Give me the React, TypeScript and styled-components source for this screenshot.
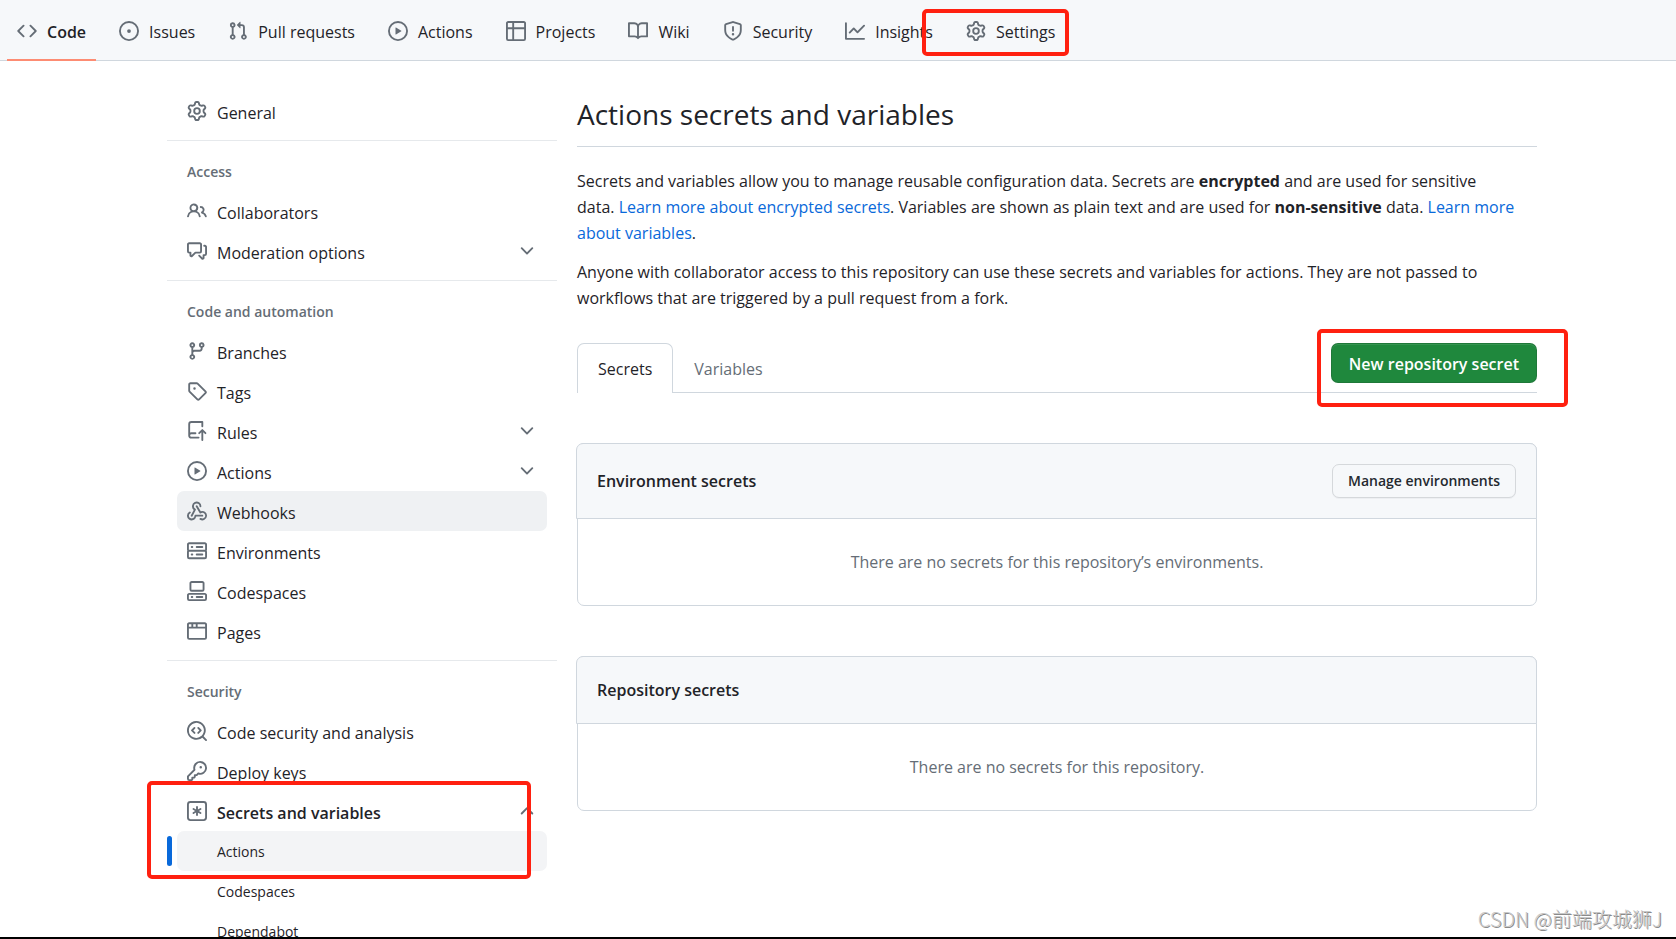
import React from "react";
import styled, { createGlobalStyle, css } from "styled-components";

const colors = {
  text: "#1f2328",
  muted: "#656d76",
  border: "#d0d7de",
  subtleBorder: "#e6e9ec",
  canvasSubtle: "#f6f8fa",
  accent: "#0969da",
  green: "#1f883d",
  marker: "#ff2010",
};

const GlobalStyle = createGlobalStyle`
  *, *::before, *::after { box-sizing: border-box; }
  body {
    margin: 0;
    background: #fff;
    color: ${colors.text};
    font-family: "Segoe UI", "Open Sans", "Noto Sans", "Noto Sans CJK SC", sans-serif;
    font-size: 16px;
    line-height: 26px;
  }
  h1, h2, h3, p, ul { margin: 0; padding: 0; }
  ul { list-style: none; }
  button { font-family: inherit; cursor: pointer; }
`;

/* ---------- icons (16px grid) ---------- */

const iconPaths = {
  code: [
    "m11.28 3.22 4.25 4.25a.75.75 0 0 1 0 1.06l-4.25 4.25a.749.749 0 0 1-1.275-.326.749.749 0 0 1 .215-.734L13.94 8l-3.72-3.72a.749.749 0 0 1 .326-1.275.749.749 0 0 1 .734.215Zm-6.56 0a.751.751 0 0 1 1.042.018.751.751 0 0 1 .018 1.042L2.06 8l3.72 3.72a.749.749 0 0 1-.326 1.275.749.749 0 0 1-.734-.215L.47 8.53a.75.75 0 0 1 0-1.06Z",
  ],
  issue: [
    "M8 9.5a1.5 1.5 0 1 0 0-3 1.5 1.5 0 0 0 0 3Z",
    "M8 0a8 8 0 1 1 0 16A8 8 0 0 1 8 0ZM1.5 8a6.5 6.5 0 1 0 13 0 6.5 6.5 0 0 0-13 0Z",
  ],
  pullRequest: [
    "M1.5 3.25a2.25 2.25 0 1 1 3 2.122v5.256a2.251 2.251 0 1 1-1.5 0V5.372A2.25 2.25 0 0 1 1.5 3.25Zm5.677-.177L9.573.677A.25.25 0 0 1 10 .854V2.5h1A2.5 2.5 0 0 1 13.5 5v5.628a2.251 2.251 0 1 1-1.5 0V5a1 1 0 0 0-1-1h-1v1.646a.25.25 0 0 1-.427.177L7.177 3.427a.25.25 0 0 1 0-.354ZM3.75 2.5a.75.75 0 1 0 0 1.5.75.75 0 0 0 0-1.5Zm0 9.5a.75.75 0 1 0 0 1.5.75.75 0 0 0 0-1.5Zm8.25.75a.75.75 0 1 0 1.5 0 .75.75 0 0 0-1.5 0Z",
  ],
  play: [
    "M8 0a8 8 0 1 1 0 16A8 8 0 0 1 8 0ZM1.5 8a6.5 6.5 0 1 0 13 0 6.5 6.5 0 0 0-13 0Zm4.879-2.773 4.264 2.559a.25.25 0 0 1 0 .428l-4.264 2.559A.25.25 0 0 1 6 10.559V5.442a.25.25 0 0 1 .379-.215Z",
  ],
  table: [
    "M0 1.75C0 .784.784 0 1.75 0h12.5C15.216 0 16 .784 16 1.75v12.5A1.75 1.75 0 0 1 14.25 16H1.75A1.75 1.75 0 0 1 0 14.25ZM6.5 6.5v8h7.75a.25.25 0 0 0 .25-.25V6.5Zm8-1.5V1.75a.25.25 0 0 0-.25-.25H6.5V5Zm-13 1.5v7.75c0 .138.112.25.25.25H5v-8ZM5 5V1.5H1.75a.25.25 0 0 0-.25.25V5Z",
  ],
  book: [
    "M0 1.75A.75.75 0 0 1 .75 1h4.253c1.227 0 2.317.59 3 1.501A3.743 3.743 0 0 1 11.006 1h4.245a.75.75 0 0 1 .75.75v10.5a.75.75 0 0 1-.75.75h-4.507a2.25 2.25 0 0 0-1.591.659l-.622.621a.75.75 0 0 1-1.06 0l-.622-.621A2.25 2.25 0 0 0 5.258 13H.75a.75.75 0 0 1-.75-.75Zm7.251 10.324.004-5.073-.002-2.253A2.25 2.25 0 0 0 5.003 2.5H1.5v9h3.757a3.75 3.75 0 0 1 1.994.574ZM8.755 4.75l-.004 7.322a3.752 3.752 0 0 1 1.992-.572H14.5v-9h-3.495a2.25 2.25 0 0 0-2.25 2.25Z",
  ],
  shield: [
    "M7.467.133a1.748 1.748 0 0 1 1.066 0l5.25 1.68A1.75 1.75 0 0 1 15 3.48V7c0 1.566-.32 3.182-1.303 4.682-.983 1.498-2.585 2.813-5.032 3.855a1.697 1.697 0 0 1-1.33 0c-2.447-1.042-4.049-2.357-5.032-3.855C1.32 10.182 1 8.566 1 7V3.48a1.75 1.75 0 0 1 1.217-1.667Zm.61 1.429a.25.25 0 0 0-.153 0l-5.25 1.68a.25.25 0 0 0-.174.238V7c0 1.358.275 2.666 1.057 3.86.784 1.194 2.121 2.34 4.366 3.297a.196.196 0 0 0 .154 0c2.245-.956 3.582-2.104 4.366-3.298C13.225 9.666 13.5 8.36 13.5 7V3.48a.251.251 0 0 0-.174-.237l-5.25-1.68ZM8.75 4.75v3a.75.75 0 0 1-1.5 0v-3a.75.75 0 0 1 1.5 0ZM9 10.5a1 1 0 1 1-2 0 1 1 0 0 1 2 0Z",
  ],
  graph: [
    "M1.5 1.75V13.5h13.75a.75.75 0 0 1 0 1.5H.75a.75.75 0 0 1-.75-.75V1.75a.75.75 0 0 1 1.5 0Zm14.28 2.53-5.25 5.25a.75.75 0 0 1-1.06 0L7 7.06 4.28 9.78a.751.751 0 0 1-1.042-.018.751.751 0 0 1-.018-1.042l3.25-3.25a.75.75 0 0 1 1.06 0L10 7.94l4.72-4.72a.751.751 0 0 1 1.042.018.751.751 0 0 1 .018 1.042Z",
  ],
  gear: [
    "M8 0a8.2 8.2 0 0 1 .701.031C9.444.095 9.99.645 10.16 1.29l.288 1.107c.018.066.079.158.212.224.231.114.454.243.668.386.123.082.233.09.299.071l1.103-.303c.644-.176 1.392.021 1.82.63.27.385.506.792.704 1.218.315.675.111 1.422-.364 1.891l-.814.806c-.049.048-.098.147-.088.294.016.257.016.515 0 .772-.01.147.038.246.088.294l.814.806c.475.469.679 1.216.364 1.891a7.977 7.977 0 0 1-.704 1.217c-.428.61-1.176.807-1.82.63l-1.102-.302c-.067-.019-.177-.011-.3.071a5.909 5.909 0 0 1-.668.386c-.133.066-.194.158-.211.224l-.29 1.106c-.168.646-.715 1.196-1.458 1.26a8.006 8.006 0 0 1-1.402 0c-.743-.064-1.289-.614-1.458-1.26l-.289-1.106c-.018-.066-.079-.158-.212-.224a5.738 5.738 0 0 1-.668-.386c-.123-.082-.233-.09-.299-.071l-1.103.303c-.644.176-1.392-.021-1.82-.63a8.12 8.12 0 0 1-.704-1.218c-.315-.675-.111-1.422.363-1.891l.815-.806c.05-.048.098-.147.088-.294a6.214 6.214 0 0 1 0-.772c.01-.147-.038-.246-.088-.294l-.815-.806C.635 6.045.431 5.298.746 4.623a7.92 7.92 0 0 1 .704-1.217c.428-.61 1.176-.807 1.82-.63l1.102.302c.067.019.177.011.3-.071.214-.143.437-.272.668-.386.133-.066.194-.158.211-.224l.29-1.106C6.009.645 6.556.095 7.299.03 7.53.01 7.764 0 8 0Zm-.571 1.525c-.036.003-.108.036-.137.146l-.289 1.105c-.147.561-.549.967-.998 1.189-.173.086-.34.183-.5.29-.417.278-.97.423-1.529.27l-1.103-.303c-.109-.03-.175.016-.195.045-.22.312-.412.644-.573.99-.014.031-.021.11.059.19l.815.806c.411.406.562.957.53 1.456a4.709 4.709 0 0 0 0 .582c.032.499-.119 1.05-.53 1.456l-.815.806c-.081.08-.073.159-.059.19.162.346.353.677.573.989.02.03.085.076.195.046l1.102-.303c.56-.153 1.113-.008 1.53.27.161.107.328.204.501.29.447.222.85.629.997 1.189l.289 1.105c.029.109.101.143.137.146a6.6 6.6 0 0 0 1.142 0c.036-.003.108-.036.137-.146l.289-1.105c.147-.561.549-.967.998-1.189.173-.086.34-.183.5-.29.417-.278.97-.423 1.529-.27l1.103.303c.109.029.175-.016.195-.045.22-.313.411-.644.573-.99.014-.031.021-.11-.059-.19l-.815-.806c-.411-.406-.562-.957-.53-1.456a4.709 4.709 0 0 0 0-.582c-.032-.499.119-1.05.53-1.456l.815-.806c.081-.08.073-.159.059-.19a6.464 6.464 0 0 0-.573-.989c-.02-.03-.085-.076-.195-.046l-1.102.303c-.56.153-1.113.008-1.53-.27a4.44 4.44 0 0 0-.501-.29c-.447-.222-.85-.629-.997-1.189l-.289-1.105c-.029-.11-.101-.143-.137-.146a6.6 6.6 0 0 0-1.142 0ZM11 8a3 3 0 1 1-6 0 3 3 0 0 1 6 0ZM9.5 8a1.5 1.5 0 1 0-3.001.001A1.5 1.5 0 0 0 9.5 8Z",
  ],
  people: [
    "M2 5.5a3.5 3.5 0 1 1 5.898 2.549 5.508 5.508 0 0 1 3.034 4.084.75.75 0 1 1-1.482.235 4 4 0 0 0-7.9 0 .75.75 0 0 1-1.482-.236A5.507 5.507 0 0 1 3.102 8.05 3.493 3.493 0 0 1 2 5.5ZM11 4a3.001 3.001 0 0 1 2.22 5.018 5.01 5.01 0 0 1 2.56 3.012.749.749 0 0 1-.885.954.752.752 0 0 1-.549-.514 3.507 3.507 0 0 0-2.522-2.372.75.75 0 0 1-.574-.73v-.352a.75.75 0 0 1 .416-.672A1.5 1.5 0 0 0 11 5.5.75.75 0 0 1 11 4Zm-5.5-.5a2 2 0 1 0-.001 3.999A2 2 0 0 0 5.5 3.5Z",
  ],
  discussion: [
    "M1.75 1h8.5c.966 0 1.75.784 1.75 1.75v5.5A1.75 1.75 0 0 1 10.25 10H7.061l-2.574 2.573A1.458 1.458 0 0 1 2 11.543V10h-.25A1.75 1.75 0 0 1 0 8.25v-5.5C0 1.784.784 1 1.75 1ZM1.5 2.75v5.5c0 .138.112.25.25.25h1a.75.75 0 0 1 .75.75v2.19l2.72-2.72a.749.749 0 0 1 .53-.22h3.5a.25.25 0 0 0 .25-.25v-5.5a.25.25 0 0 0-.25-.25h-8.5a.25.25 0 0 0-.25.25Zm13 2a.25.25 0 0 0-.25-.25h-.5a.75.75 0 0 1 0-1.5h.5c.966 0 1.75.784 1.75 1.75v5.5A1.75 1.75 0 0 1 14.25 12H14v1.543a1.458 1.458 0 0 1-2.487 1.03L9.22 12.28a.749.749 0 0 1 .326-1.275.749.749 0 0 1 .734.215l2.22 2.22v-2.19a.75.75 0 0 1 .75-.75h1a.25.25 0 0 0 .25-.25Z",
  ],
  branch: [
    "M9.5 3.25a2.25 2.25 0 1 1 3 2.122V6A2.5 2.5 0 0 1 10 8.5H6a1 1 0 0 0-1 1v1.128a2.251 2.251 0 1 1-1.5 0V5.372a2.25 2.25 0 1 1 1.5 0v1.836A2.493 2.493 0 0 1 6 7h4a1 1 0 0 0 1-1v-.628A2.25 2.25 0 0 1 9.5 3.25Zm-6 0a.75.75 0 1 0 1.5 0 .75.75 0 0 0-1.5 0Zm8.25-.75a.75.75 0 1 0 0 1.5.75.75 0 0 0 0-1.5ZM4.25 12a.75.75 0 1 0 0 1.5.75.75 0 0 0 0-1.5Z",
  ],
  tag: [
    "M1 7.775V2.75C1 1.784 1.784 1 2.75 1h5.025c.464 0 .91.184 1.238.513l6.25 6.25a1.75 1.75 0 0 1 0 2.474l-5.026 5.026a1.75 1.75 0 0 1-2.474 0l-6.25-6.25A1.752 1.752 0 0 1 1 7.775Zm1.5 0c0 .066.026.13.073.177l6.25 6.25a.25.25 0 0 0 .354 0l5.025-5.025a.25.25 0 0 0 0-.354l-6.25-6.25a.25.25 0 0 0-.177-.073H2.75a.25.25 0 0 0-.25.25ZM6 5a1 1 0 1 1 0 2 1 1 0 0 1 0-2Z",
  ],
  repoPush: [
    "M1 2.5A2.5 2.5 0 0 1 3.5 0h8.75a.75.75 0 0 1 .75.75v3.5a.75.75 0 0 1-1.5 0V1.5h-8a1 1 0 0 0-1 1v6.708A2.493 2.493 0 0 1 3.5 9h3.25a.75.75 0 0 1 0 1.5H3.5a1 1 0 0 0 0 2h5.75a.75.75 0 0 1 0 1.5H3.5A2.5 2.5 0 0 1 1 11.5Zm13.23 7.79h-.001l-1.224-1.224v6.184a.75.75 0 0 1-1.5 0V9.066L10.28 10.29a.75.75 0 0 1-1.06-1.061l2.505-2.504a.75.75 0 0 1 1.06 0L15.29 9.23a.751.751 0 0 1-.018 1.042.751.751 0 0 1-1.042.018Z",
  ],
  webhook: [
    "M5.5 4.25a2.25 2.25 0 0 1 4.5 0 .75.75 0 0 0 1.5 0 3.75 3.75 0 1 0-6.14 2.889l-2.272 4.258a.75.75 0 0 0 1.324.706L7 7.25a.75.75 0 0 0-.309-1.015A2.25 2.25 0 0 1 5.5 4.25Z",
    "M7.364 3.607a.75.75 0 0 1 1.03.257l2.608 4.349a3.75 3.75 0 1 1-.628 6.785.75.75 0 0 1 .752-1.299 2.25 2.25 0 1 0-.033-3.88.75.75 0 0 1-1.03-.256L7.107 4.636a.75.75 0 0 1 .257-1.03Z",
    "M2.9 8.776A.75.75 0 0 1 2.625 9.8 2.25 2.25 0 1 0 6 11.75a.75.75 0 0 1 .75-.751h5.5a.75.75 0 0 1 0 1.5H7.425a3.751 3.751 0 1 1-5.55-3.998.75.75 0 0 1 1.024.274Z",
  ],
  server: [
    "M1.75 1h12.5c.966 0 1.75.784 1.75 1.75v4c0 .372-.116.717-.314 1 .198.283.314.628.314 1v4a1.75 1.75 0 0 1-1.75 1.75H1.75A1.75 1.75 0 0 1 0 12.75v-4c0-.358.109-.707.314-1a1.739 1.739 0 0 1-.314-1v-4C0 1.784.784 1 1.75 1ZM1.5 2.75v4c0 .138.112.25.25.25h12.5a.25.25 0 0 0 .25-.25v-4a.25.25 0 0 0-.25-.25H1.75a.25.25 0 0 0-.25.25Zm.25 5.75a.25.25 0 0 0-.25.25v4c0 .138.112.25.25.25h12.5a.25.25 0 0 0 .25-.25v-4a.25.25 0 0 0-.25-.25ZM7 4.75A.75.75 0 0 1 7.75 4h4.5a.75.75 0 0 1 0 1.5h-4.5A.75.75 0 0 1 7 4.75ZM7.75 10h4.5a.75.75 0 0 1 0 1.5h-4.5a.75.75 0 0 1 0-1.5ZM3 4.75A.75.75 0 0 1 3.75 4h.5a.75.75 0 0 1 0 1.5h-.5A.75.75 0 0 1 3 4.75ZM3.75 10h.5a.75.75 0 0 1 0 1.5h-.5a.75.75 0 0 1 0-1.5Z",
  ],
  codespaces: [
    "M0 11.25c0-.966.784-1.75 1.75-1.75h12.5c.966 0 1.75.784 1.75 1.75v3A1.75 1.75 0 0 1 14.25 16H1.75A1.75 1.75 0 0 1 0 14.25Zm2-9.5C2 .784 2.784 0 3.75 0h8.5C13.216 0 14 .784 14 1.75v5a1.75 1.75 0 0 1-1.75 1.75h-8.5A1.75 1.75 0 0 1 2 6.75Zm1.75-.25a.25.25 0 0 0-.25.25v5c0 .138.112.25.25.25h8.5a.25.25 0 0 0 .25-.25v-5a.25.25 0 0 0-.25-.25Zm-2 9.5a.25.25 0 0 0-.25.25v3c0 .138.112.25.25.25h12.5a.25.25 0 0 0 .25-.25v-3a.25.25 0 0 0-.25-.25Z",
    "M7 12.75a.75.75 0 0 1 .75-.75h4.5a.75.75 0 0 1 0 1.5h-4.5a.75.75 0 0 1-.75-.75Zm-4 0a.75.75 0 0 1 .75-.75h.5a.75.75 0 0 1 0 1.5h-.5a.75.75 0 0 1-.75-.75Z",
  ],
  browser: [
    "M0 2.75C0 1.784.784 1 1.75 1h12.5c.966 0 1.75.784 1.75 1.75v10.5A1.75 1.75 0 0 1 14.25 15H1.75A1.75 1.75 0 0 1 0 13.25ZM14.5 6h-13v7.25c0 .138.112.25.25.25h12.5a.25.25 0 0 0 .25-.25Zm-6-3.5v2h6V2.75a.25.25 0 0 0-.25-.25ZM5 2.5v2h2v-2Zm-3.25 0a.25.25 0 0 0-.25.25V4.5h2v-2Z",
  ],
  codescan: [
    "M8.47 4.97a.75.75 0 0 0 0 1.06L9.94 7.5 8.47 8.97a.75.75 0 1 0 1.06 1.06l2-2a.75.75 0 0 0 0-1.06l-2-2a.75.75 0 0 0-1.06 0ZM6.53 6.03a.75.75 0 0 0-1.06-1.06l-2 2a.75.75 0 0 0 0 1.06l2 2a.75.75 0 1 0 1.06-1.06L5.06 7.5l1.47-1.47Z",
    "M12.246 13.307a7.501 7.501 0 1 1 1.06-1.06l2.474 2.473a.749.749 0 0 1-.326 1.275.749.749 0 0 1-.734-.215ZM1.5 7.5a6.002 6.002 0 0 0 3.608 5.504 6.002 6.002 0 0 0 6.486-1.117.748.748 0 0 1 .292-.293A6 6 0 1 0 1.5 7.5Z",
  ],
  key: [
    "M10.5 0a5.499 5.499 0 1 1-1.288 10.848l-.932.932a.749.749 0 0 1-.53.22H7v.75a.749.749 0 0 1-.22.53l-.5.5a.749.749 0 0 1-.53.22H5v.75a.749.749 0 0 1-.22.53l-.5.5a.749.749 0 0 1-.53.22h-2A1.75 1.75 0 0 1 0 14.25v-2c0-.199.079-.389.22-.53l4.932-4.932A5.5 5.5 0 0 1 10.5 0Zm-4 5.5c-.001.431.069.86.205 1.269a.75.75 0 0 1-.181.768L1.5 12.56v1.69c0 .138.112.25.25.25h1.69l.06-.06v-1.19a.75.75 0 0 1 .75-.75h1.19l.06-.06v-1.19a.75.75 0 0 1 .75-.75h1.19l1.023-1.025a.75.75 0 0 1 .768-.18A4 4 0 1 0 6.5 5.5ZM11 6a1 1 0 1 1 0-2 1 1 0 0 1 0 2Z",
  ],
  keyAsterisk: [
    "M0 2.75A2.75 2.75 0 0 1 2.75 0h10.5A2.75 2.75 0 0 1 16 2.75v10.5A2.75 2.75 0 0 1 13.25 16H2.75A2.75 2.75 0 0 1 0 13.25ZM2.75 1.5c-.69 0-1.25.56-1.25 1.25v10.5c0 .69.56 1.25 1.25 1.25h10.5c.69 0 1.25-.56 1.25-1.25V2.75c0-.69-.56-1.25-1.25-1.25Z",
    "M8 4a.75.75 0 0 1 .75.75V6.7l1.69-.975a.75.75 0 0 1 .75 1.3L9.5 8l1.69.976a.75.75 0 0 1-.75 1.298L8.75 9.3v1.951a.75.75 0 0 1-1.5 0V9.299l-1.69.976a.75.75 0 0 1-.75-1.3L6.5 8l-1.69-.975a.75.75 0 0 1 .75-1.3l1.69.976V4.75A.75.75 0 0 1 8 4Z",
  ],
  chevronDown: [
    "M12.78 5.22a.749.749 0 0 1 0 1.06l-4.25 4.25a.749.749 0 0 1-1.06 0L3.22 6.28a.749.749 0 1 1 1.06-1.06L8 8.939l3.72-3.719a.749.749 0 0 1 1.06 0Z",
  ],
  chevronUp: [
    "M3.22 10.53a.749.749 0 0 1 0-1.06l4.25-4.25a.749.749 0 0 1 1.06 0l4.25 4.25a.749.749 0 1 1-1.06 1.06L8 6.811 4.28 10.53a.749.749 0 0 1-1.06 0Z",
  ],
};

type IconName = keyof typeof iconPaths;

const IconSvg = styled.svg`
  flex: none;
  display: block;
  width: 20px;
  height: 20px;
  fill: ${colors.muted};
`;

function Icon({ name }: { name: IconName }) {
  return (
    <IconSvg viewBox="0 0 16 16" aria-hidden="true">
      {iconPaths[name].map((d) => (
        <path key={d} d={d} />
      ))}
    </IconSvg>
  );
}

/* ---------- page frame ---------- */

const Page = styled.div`
  position: relative;
  height: 100vh;
  overflow: hidden;
  border-bottom: 2px solid #000;
`;

const markerFrame = css`
  content: "";
  position: absolute;
  z-index: 1;
  border: 4px solid ${colors.marker};
  border-radius: 5px;
  pointer-events: none;
`;

/* ---------- repository navigation ---------- */

const RepoNav = styled.nav`
  padding: 0 7px;
  background: ${colors.canvasSubtle};
  border-bottom: 1px solid ${colors.border};
`;

const RepoNavList = styled.ul`
  display: flex;
  gap: 13px;
`;

const RepoNavItem = styled.li<{ $marked?: boolean }>`
  position: relative;

  ${({ $marked }) =>
    $marked &&
    css`
      &::after {
        ${markerFrame}
        inset: 9px -4px 4px -34px;
      }
    `}
`;

const RepoNavLink = styled.a<{ $current?: boolean }>`
  position: relative;
  display: flex;
  align-items: center;
  gap: 10px;
  height: 60px;
  padding: 2px 10px 0;
  color: ${colors.text};
  font-weight: ${({ $current }) => ($current ? 600 : 400)};
  text-decoration: none;

  ${({ $current }) =>
    $current &&
    css`
      &::after {
        content: "";
        position: absolute;
        right: 0;
        bottom: -1px;
        left: 0;
        height: 2px;
        background: #fd8c73;
      }
    `}
`;

const RepoNavLabel = styled.span`
  padding-top: 2px;
`;

/* ---------- layout ---------- */

const Columns = styled.div`
  display: grid;
  grid-template-columns: 390px minmax(0, 1fr);
  gap: 20px;
  padding: 30px 139px 0 167px;
`;

/* ---------- sidebar ---------- */

const SideGroup = styled.section`
  & + & {
    margin-top: 9px;
    border-top: 1px solid ${colors.subtleBorder};
  }
`;

const SideTitle = styled.h3`
  padding: 18px 20px 6px;
  color: ${colors.muted};
  font-size: 14px;
  font-weight: 600;
`;

const SideItem = styled.li<{ $marked?: boolean }>`
  position: relative;
  padding: 0 10px;

  ${({ $marked }) =>
    $marked &&
    css`
      &::after {
        ${markerFrame}
        top: -10px;
        right: 26px;
        left: -20px;
        height: 98px;
      }
    `}
`;

const sideRow = css<{ $tone?: string; $strong?: boolean }>`
  display: flex;
  align-items: center;
  gap: 10px;
  width: 100%;
  height: 40px;
  padding: 0 10px;
  border: 0;
  border-radius: 7px;
  background: ${({ $tone }) => $tone ?? "transparent"};
  color: ${colors.text};
  font-size: 16px;
  font-weight: ${({ $strong }) => ($strong ? 600 : 400)};
  line-height: 26px;
  text-align: left;
  text-decoration: none;
`;

const SideLink = styled.a`
  ${sideRow}
`;

const SideToggle = styled.button`
  ${sideRow}
`;

const SideLabel = styled.span`
  flex: 1;
  padding-top: 3px;
`;

const SubItem = styled.li<{ $current?: boolean }>`
  position: relative;

  ${({ $current }) =>
    $current &&
    css`
      &::before {
        content: "";
        position: absolute;
        top: 5px;
        left: -10px;
        width: 5px;
        height: 30px;
        border-radius: 3px;
        background: ${colors.accent};
      }
    `}
`;

const SubLink = styled.a<{ $current?: boolean }>`
  display: flex;
  align-items: center;
  height: 40px;
  padding: 2px 10px 0 40px;
  border-radius: 7px;
  background: ${({ $current }) => ($current ? "#f3f4f6" : "transparent")};
  color: ${colors.text};
  font-size: 14px;
  text-decoration: none;
`;

/* ---------- main column ---------- */

const PageTitle = styled.h1`
  padding: 3px 0 12px;
  border-bottom: 1px solid ${colors.border};
  font-size: 28px;
  font-weight: 400;
  line-height: 40px;
`;

const Intro = styled.div`
  display: grid;
  gap: 13px;
  padding-top: 21px;
`;

const TextLink = styled.a`
  color: ${colors.accent};
  text-decoration: none;
`;

const TabBar = styled.div`
  display: flex;
  justify-content: space-between;
  align-items: flex-start;
  margin: 32px 0 50px;
  box-shadow: inset 0 -1px 0 ${colors.border};
`;

const TabList = styled.div`
  display: flex;
`;

const Tab = styled.button<{ $current?: boolean }>`
  height: 50px;
  padding: 1px 20px 0;
  border: 1px solid ${({ $current }) => ($current ? colors.border : "transparent")};
  border-bottom: 0;
  border-radius: 7px 7px 0 0;
  background: ${({ $current }) => ($current ? "#fff" : "transparent")};
  color: ${({ $current }) => ($current ? colors.text : colors.muted)};
  font-size: 16px;
  line-height: 26px;
`;

const MarkedAction = styled.div`
  position: relative;

  &::after {
    ${markerFrame}
    inset: -14px -31px -24px -14px;
  }
`;

const PrimaryButton = styled.button`
  height: 40px;
  padding: 2px 17px 0;
  border: 1px solid rgba(31, 35, 40, 0.15);
  border-radius: 7px;
  background: ${colors.green};
  box-shadow: inset 0 1px 0 rgba(255, 255, 255, 0.1);
  color: #fff;
  font-size: 16px;
  font-weight: 600;
  line-height: 26px;
`;

const SecondaryButton = styled.button`
  height: 34px;
  padding: 0 15px;
  border: 1px solid #d5d8db;
  border-radius: 7px;
  background: ${colors.canvasSubtle};
  box-shadow: 0 1px 0 rgba(31, 35, 40, 0.04);
  color: #24292f;
  font-size: 14px;
  font-weight: 600;
  line-height: 22px;
`;

const Panel = styled.section`
  border: 1px solid ${colors.border};
  border-radius: 7px;

  & + & {
    margin-top: 50px;
  }
`;

/* The header's own border overlaps the panel border and reaches past it on the left. */
const PanelHeader = styled.header`
  display: flex;
  justify-content: space-between;
  align-items: center;
  margin: -1px -1px 0 -2px;
  padding: 20px;
  border: 1px solid ${colors.border};
  border-radius: 7px 7px 0 0;
  background: ${colors.canvasSubtle};
`;

const PanelTitle = styled.h2`
  font-size: 16px;
  font-weight: 600;
  line-height: 26px;
`;

const EmptyNote = styled.p`
  padding: 30px 20px;
  color: ${colors.muted};
  text-align: center;
`;

const Watermark = styled.div`
  position: absolute;
  right: 14px;
  bottom: 5px;
  color: #c8c8c8;
  font-family: "Noto Sans CJK SC", sans-serif;
  font-size: 20px;
  font-weight: 300;
  text-shadow: 1px 1px 0 #8a8a8a;
`;

/* ---------- data ---------- */

const navItems: { icon: IconName; label: string; current?: boolean; marked?: boolean }[] = [
  { icon: "code", label: "Code", current: true },
  { icon: "issue", label: "Issues" },
  { icon: "pullRequest", label: "Pull requests" },
  { icon: "play", label: "Actions" },
  { icon: "table", label: "Projects" },
  { icon: "book", label: "Wiki" },
  { icon: "shield", label: "Security" },
  { icon: "graph", label: "Insights" },
  { icon: "gear", label: "Settings", marked: true },
];

interface SideEntry {
  icon: IconName;
  label: string;
  tone?: string;
  expandable?: boolean;
  children?: { label: string; current?: boolean }[];
}

const sideGroups: { title?: string; items: SideEntry[] }[] = [
  { items: [{ icon: "gear", label: "General" }] },
  {
    title: "Access",
    items: [
      { icon: "people", label: "Collaborators" },
      { icon: "discussion", label: "Moderation options", expandable: true },
    ],
  },
  {
    title: "Code and automation",
    items: [
      { icon: "branch", label: "Branches" },
      { icon: "tag", label: "Tags" },
      { icon: "repoPush", label: "Rules", expandable: true },
      { icon: "play", label: "Actions", expandable: true },
      { icon: "webhook", label: "Webhooks", tone: "#eff1f3" },
      { icon: "server", label: "Environments" },
      { icon: "codespaces", label: "Codespaces" },
      { icon: "browser", label: "Pages" },
    ],
  },
  {
    title: "Security",
    items: [
      { icon: "codescan", label: "Code security and analysis" },
      { icon: "key", label: "Deploy keys" },
      {
        icon: "keyAsterisk",
        label: "Secrets and variables",
        expandable: true,
        children: [
          { label: "Actions", current: true },
          { label: "Codespaces" },
          { label: "Dependabot" },
        ],
      },
    ],
  },
];

function SideRow({ entry }: { entry: SideEntry }) {
  const open = Boolean(entry.children);
  return (
    <SideItem $marked={open}>
      {entry.expandable ? (
        <SideToggle type="button" aria-expanded={open} $strong={open}>
          <Icon name={entry.icon} />
          <SideLabel>{entry.label}</SideLabel>
          <Icon name={open ? "chevronUp" : "chevronDown"} />
        </SideToggle>
      ) : (
        <SideLink href="#" $tone={entry.tone}>
          <Icon name={entry.icon} />
          <SideLabel>{entry.label}</SideLabel>
        </SideLink>
      )}
      {entry.children && (
        <ul>
          {entry.children.map((child) => (
            <SubItem key={child.label} $current={child.current}>
              <SubLink
                href="#"
                $current={child.current}
                aria-current={child.current ? "page" : undefined}
              >
                {child.label}
              </SubLink>
            </SubItem>
          ))}
        </ul>
      )}
    </SideItem>
  );
}

export default function App() {
  return (
    <Page>
      <GlobalStyle />
      <RepoNav aria-label="Repository">
        <RepoNavList>
          {navItems.map((item) => (
            <RepoNavItem key={item.label} $marked={item.marked}>
              <RepoNavLink href="#" $current={item.current}>
                <Icon name={item.icon} />
                <RepoNavLabel>{item.label}</RepoNavLabel>
              </RepoNavLink>
            </RepoNavItem>
          ))}
        </RepoNavList>
      </RepoNav>

      <Columns>
        <nav aria-label="Settings">
          {sideGroups.map((group) => (
            <SideGroup key={group.title ?? "general"}>
              {group.title && <SideTitle>{group.title}</SideTitle>}
              <ul>
                {group.items.map((entry) => (
                  <SideRow key={entry.label} entry={entry} />
                ))}
              </ul>
            </SideGroup>
          ))}
        </nav>

        <main>
          <PageTitle>Actions secrets and variables</PageTitle>
          <Intro>
            <p>
              Secrets and variables allow you to manage reusable configuration data. Secrets are{" "}
              <strong>encrypted</strong> and are used for sensitive data.&nbsp;
              <TextLink href="#">Learn more about encrypted secrets</TextLink>. Variables are shown
              as plain text and are used for <strong>non-sensitive</strong> data.{" "}
              <TextLink href="#">Learn more about variables</TextLink>.
            </p>
            <p>
              Anyone with collaborator access to this repository can use these secrets and variables
              for actions. They are not passed to workflows that are triggered by a pull request
              from a fork.
            </p>
          </Intro>

          <TabBar>
            <TabList role="tablist">
              <Tab type="button" role="tab" aria-selected="true" $current>
                Secrets
              </Tab>
              <Tab type="button" role="tab" aria-selected="false">
                Variables
              </Tab>
            </TabList>
            <MarkedAction>
              <PrimaryButton type="button">New repository secret</PrimaryButton>
            </MarkedAction>
          </TabBar>

          <Panel>
            <PanelHeader>
              <PanelTitle>Environment secrets</PanelTitle>
              <SecondaryButton type="button">Manage environments</SecondaryButton>
            </PanelHeader>
            <EmptyNote>There are no secrets for this repository’s environments.</EmptyNote>
          </Panel>

          <Panel>
            <PanelHeader>
              <PanelTitle>Repository secrets</PanelTitle>
            </PanelHeader>
            <EmptyNote>There are no secrets for this repository.</EmptyNote>
          </Panel>
        </main>
      </Columns>

      <Watermark>CSDN @前端攻城狮J</Watermark>
    </Page>
  );
}
